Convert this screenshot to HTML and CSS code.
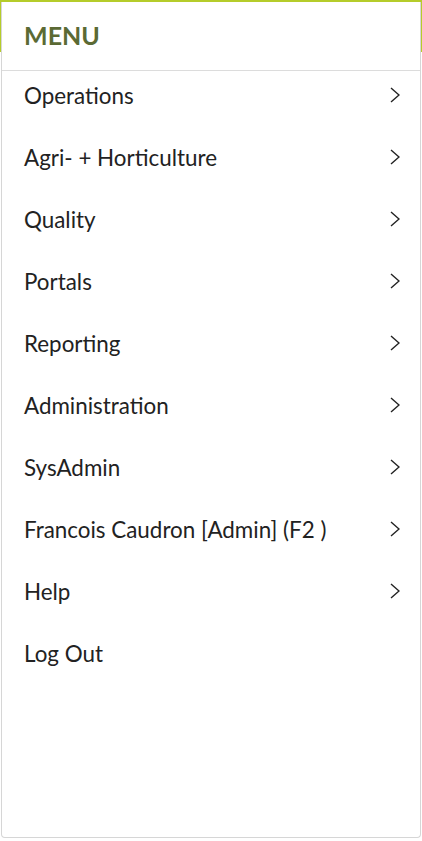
FILE: index.html
```html
<!DOCTYPE html>
<html lang="en">
<head>
    <meta charset="UTF-8">
    <meta name="viewport" content="width=device-width, initial-scale=1.0">
    <title>Menu</title>
    <link rel="stylesheet" href="styles.css">
</head>
<body>
    <div class="menu-panel">
        <div class="menu-header">MENU</div>
        <ul class="menu-list">
            <li><span>Operations</span><svg class="chevron" viewBox="0 0 10 16"><path d="M1 1 L9 8 L1 15"/></svg></li>
            <li><span>Agri- + Horticulture</span><svg class="chevron" viewBox="0 0 10 16"><path d="M1 1 L9 8 L1 15"/></svg></li>
            <li><span>Quality</span><svg class="chevron" viewBox="0 0 10 16"><path d="M1 1 L9 8 L1 15"/></svg></li>
            <li><span>Portals</span><svg class="chevron" viewBox="0 0 10 16"><path d="M1 1 L9 8 L1 15"/></svg></li>
            <li><span>Reporting</span><svg class="chevron" viewBox="0 0 10 16"><path d="M1 1 L9 8 L1 15"/></svg></li>
            <li><span>Administration</span><svg class="chevron" viewBox="0 0 10 16"><path d="M1 1 L9 8 L1 15"/></svg></li>
            <li><span>SysAdmin</span><svg class="chevron" viewBox="0 0 10 16"><path d="M1 1 L9 8 L1 15"/></svg></li>
            <li><span>Francois Caudron [Admin] (F2 )</span><svg class="chevron" viewBox="0 0 10 16"><path d="M1 1 L9 8 L1 15"/></svg></li>
            <li><span>Help</span><svg class="chevron" viewBox="0 0 10 16"><path d="M1 1 L9 8 L1 15"/></svg></li>
            <li><span>Log Out</span></li>
        </ul>
    </div>
</body>
</html>
```

FILE: styles.css
```css
body {
    margin: 0;
    padding: 0;
    font-family: Lato, "Open Sans", sans-serif;
    background: linear-gradient(#b5cc2a, #b5cc2a) no-repeat top left / 100% 52px, #ffffff;
    color: #222222;
}

.menu-panel {
    box-sizing: border-box;
    margin: 2px 1px 0 1px;
    height: 836px;
    background: #ffffff;
    border: 1px solid #d6d6d6;
    border-top: none;
    border-radius: 0 0 4px 4px;
}

.menu-header {
    height: 69px;
    box-sizing: border-box;
    padding: 18px 0 0 22px;
    font-size: 25px;
    font-weight: bold;
    color: #5b6a34;
    border-bottom: 1px solid #dcdcdc;
}

.menu-list {
    list-style: none;
    margin: 0;
    padding: 0;
}

.menu-list li {
    box-sizing: border-box;
    display: flex;
    align-items: center;
    justify-content: space-between;
    height: 62px;
    padding: 0 20px 14px 22px;
    font-size: 22.4px;
}

.chevron {
    width: 10px;
    height: 16px;
    fill: none;
    stroke: #222222;
    stroke-width: 1.4;
}
```
